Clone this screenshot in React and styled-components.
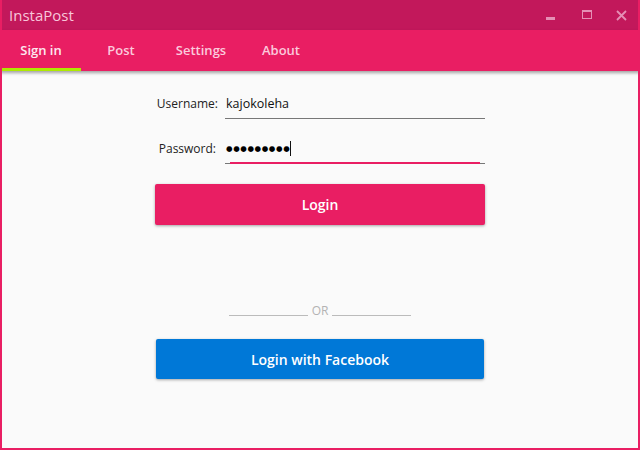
import React from 'react'
import styled, { createGlobalStyle } from 'styled-components'

const Global = createGlobalStyle`
  html, body { margin: 0; padding: 0; }
  body { font-family: "Open Sans", "Noto Sans", sans-serif; }
`

const Window = styled.div`
  width: 640px;
  height: 450px;
  box-sizing: border-box;
  border: 2px solid #e91e63;
  border-top: none;
  display: flex;
  flex-direction: column;
  background: #fafafa;
  overflow: hidden;
`

const TitleBar = styled.div`
  height: 30px;
  background: #c2185b;
  display: flex;
  align-items: center;
  margin: 0 -2px;
  padding-left: 9px;
`

const Title = styled.div`
  flex: 1;
  color: #f8c6da;
  font-size: 15px;
  font-family: "Open Sans", sans-serif;
`

const Control = styled.div`
  width: 34px;
  height: 30px;
  display: flex;
  align-items: center;
  justify-content: center;
  margin-right: ${p => p.$gap || 0}px;
`

const TabBar = styled.div`
  height: 41px;
  background: #e91e63;
  display: flex;
  margin: 0 -2px;
  padding-left: 1px;
  box-shadow: 0 2px 3px rgba(0, 0, 0, 0.35);
  position: relative;
  z-index: 1;
`

const Tab = styled.div`
  width: 80px;
  display: flex;
  align-items: center;
  justify-content: center;
  font-size: 13px;
  font-weight: 600;
  color: ${p => (p.$active ? '#fde7ef' : '#fbcadc')};
  box-sizing: border-box;
  border-bottom: 3px solid ${p => (p.$active ? '#aeea00' : 'transparent')};
  padding-top: 2px;
`

const Content = styled.div`
  flex: 1;
  display: flex;
  flex-direction: column;
  align-items: center;
  padding-top: 22px;
`

const Form = styled.div`
  width: 330px;
  display: flex;
  flex-direction: column;
`

const Field = styled.div`
  display: flex;
  align-items: flex-end;
  height: 26px;
  margin-bottom: ${p => p.$mb}px;
`

const Label = styled.div`
  width: 63px;
  text-align: right;
  font-size: 12px;
  color: #222;
  padding-bottom: ${p => p.$pb}px;
  padding-right: ${p => p.$pr || 0}px;
  box-sizing: border-box;
`

const Input = styled.div`
  flex: 1;
  margin-left: 7px;
  height: 26px;
  box-sizing: border-box;
  border-bottom: 1px solid #777;
  font-size: 12.5px;
  color: #111;
  display: flex;
  align-items: center;
  padding-left: 1px;
  padding-bottom: 4px;
  position: relative;

  &::after {
    content: '';
    display: ${p => (p.$focus ? 'block' : 'none')};
    position: absolute;
    left: 5px;
    right: 5px;
    bottom: -1px;
    height: 2px;
    background: #e91e63;
  }
`

const Dots = styled.span`
  font-size: 7.5px;
  letter-spacing: 0.6px;
  font-family: "DejaVu Sans", sans-serif;
  color: #000;
`

const Caret = styled.span`
  display: inline-block;
  width: 1px;
  height: 15px;
  background: #111;
`

const Button = styled.div`
  height: ${p => p.$h}px;
  width: ${p => p.$w}px;
  margin-top: ${p => p.$mt || 0}px;
  background: ${p => p.$bg};
  border-radius: 2px;
  box-shadow: 0 1px 3px rgba(0, 0, 0, 0.35);
  display: flex;
  align-items: center;
  justify-content: center;
  color: #fff;
  font-size: 14px;
  font-weight: 600;
`

const Or = styled.div`
  margin-top: 77px;
  display: flex;
  align-items: center;
  gap: 4px;
  color: #b3b3b3;
  font-size: 12px;
`

const Rule = styled.div`
  width: 79px;
  height: 1px;
  background: #bbb;
  margin-top: 10px;
`

export default function App() {
  return (
    <>
      <Global />
      <Window>
        <TitleBar>
          <Title>InstaPost</Title>
          <Control $gap={2}>
            <svg width="10" height="10" viewBox="0 0 10 10">
              <rect x="0" y="7" width="9" height="3" fill="#e58fb5" />
            </svg>
          </Control>
          <Control $gap={0}>
            <svg width="10" height="10" viewBox="0 0 10 10">
              <rect x="0.5" y="0.5" width="9" height="8" fill="none" stroke="#e58fb5" />
              <rect x="0" y="0" width="10" height="2" fill="#e58fb5" />
            </svg>
          </Control>
          <Control $gap={2}>
            <svg width="11" height="11" viewBox="0 0 11 11">
              <path d="M1 1 L10 10 M10 1 L1 10" stroke="#e58fb5" strokeWidth="1.8" />
            </svg>
          </Control>
        </TitleBar>
        <TabBar>
          <Tab $active>Sign in</Tab>
          <Tab>Post</Tab>
          <Tab>Settings</Tab>
          <Tab>About</Tab>
        </TabBar>
        <Content>
          <Form>
            <Field $mb={19}>
              <Label $pb={7}>Username:</Label>
              <Input>kajokoleha</Input>
            </Field>
            <Field $mb={20}>
              <Label $pb={7} $pr={2}>Password:</Label>
              <Input $focus>
                <Dots>●●●●●●●●●</Dots>
                <Caret />
              </Input>
            </Field>
            <Button $h={41} $w={330} $bg="#e91e63">Login</Button>
          </Form>
          <Or>
            <Rule />
            <span>OR</span>
            <Rule />
          </Or>
          <Button $h={40} $w={328} $mt={20} $bg="#0078d7">
            Login with Facebook
          </Button>
        </Content>
      </Window>
    </>
  )
}
